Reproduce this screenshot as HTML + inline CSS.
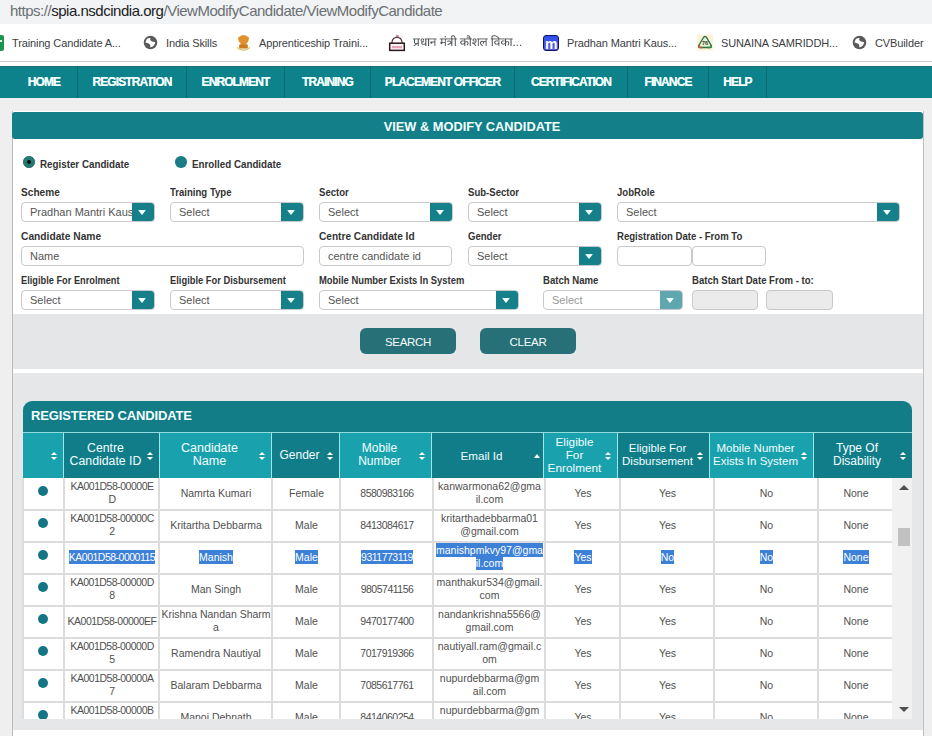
<!DOCTYPE html>
<html><head><meta charset="utf-8">
<style>
*{box-sizing:border-box;margin:0;padding:0}
html,body{width:932px;height:736px;overflow:hidden;background:#efefef;font-family:"Liberation Sans",sans-serif;position:relative}
.a{position:absolute}
#url{left:0;top:0;width:932px;height:24px;background:#f1f3f4}
#url span{position:absolute;left:10px;top:2px;font-size:15px;letter-spacing:-0.48px;color:#6b6f73;white-space:nowrap;line-height:18px}
#url b{font-weight:normal;color:#202124}
#bm{left:0;top:24px;width:932px;height:37px;background:#fff}
.bt{position:absolute;top:12px;font-size:11px;letter-spacing:-0.12px;color:#3c4043;white-space:nowrap;line-height:14px}
#sep{left:0;top:61px;width:932px;height:1px;background:#c9cacb}
#gap{left:0;top:62px;width:932px;height:4px;background:#fff}
#nav{left:0;top:66px;width:932px;height:32px;background:#0e828a;border-top:1px solid #1b6d73}
.ni{position:absolute;top:-1px;height:32px;border-right:1px solid #0b6a72;color:#f0ffff;font-size:12px;font-weight:bold;letter-spacing:-0.9px;text-shadow:0 0 0.4px #fff;text-align:center;line-height:32px;white-space:nowrap}
#panel{left:12px;top:111px;width:912px;height:640px;background:#fff;border-right:1px solid #c8c8c8;border-left:1px solid #dcdcdc}
#ph{left:0;top:0;width:911px;height:28px;background:#127f89;border-radius:3px 3px 3px 3px;color:#f4ffff;font-size:12.5px;font-weight:bold;text-align:center;line-height:28px}
.lb{position:absolute;font-size:11px;font-weight:bold;color:#333;white-space:nowrap;line-height:12px;transform:scaleX(0.87);transform-origin:0 0}
.sel{position:absolute;height:20px;border:1px solid #c9c9c9;border-radius:4px;background:#fff;overflow:hidden}
.sel span{position:absolute;left:8px;top:3px;font-size:11px;color:#555;white-space:nowrap;line-height:13px}
.sel i{position:absolute;right:-1px;top:-1px;width:23px;height:20px;background:#15808a;border-radius:0 4px 4px 0}
.dis span{color:#9a9a9a}.dis i{background:#5fa7af}
.sel i:after{content:"";position:absolute;left:5.5px;top:8px;border-left:4.8px solid transparent;border-right:4.8px solid transparent;border-top:5px solid #f4ffff;border-radius:1px}
#gray1{left:1px;top:202px;width:910px;height:55px;background:#e5e6e8}
.btn{position:absolute;top:217px;width:96px;height:26px;background:#287078;border-radius:6px;color:#f4fbfc;font-size:11.5px;letter-spacing:-0.3px;text-align:center;line-height:28px}
#gray2{left:1px;top:262px;width:910px;height:357px;background:#e6e7e9}
#tp{left:23px;top:401px;width:889px;height:32px;background:#127a84;border-radius:9px 9px 0 0;color:#f6ffff;font-size:13px;font-weight:bold;line-height:30px;padding-left:8px;letter-spacing:0}
.th{position:absolute;z-index:2;top:432px;height:46px;color:#f2fdff;font-size:12px;text-align:center;line-height:13px;border-left:1.5px solid #9de8ed;border-top:1px solid #8fdbe0}
.th span{position:absolute;left:0;right:12px;top:50%;transform:translateY(-50%);margin-top:-1px}
.th.l{background:#19a2ae}.th.d{background:#107d89}
.th u{position:absolute;right:9px;top:19px;width:0;height:0}
.th u:before{content:"";position:absolute;left:-3px;top:0;border-left:3px solid transparent;border-right:3px solid transparent;border-bottom:3.5px solid #fff}
.th u:after{content:"";position:absolute;left:-3px;top:4.5px;border-left:3px solid transparent;border-right:3px solid transparent;border-top:3.5px solid #fff}
.th u.up{top:21px;right:6px}
.th u.up:before{left:-3px;border-left-width:3px;border-right-width:3px;border-bottom-width:4.5px}
.th u.up:after{display:none}
.td{position:absolute;height:32px;display:flex;align-items:center;justify-content:center;text-align:center;font-size:10.5px;color:#505050;line-height:13px}
.td.s i{font-style:normal;background:#3d80d8;color:#fff;padding:1px 0}
.dot{position:absolute;left:15px;width:10px;height:10px;border-radius:50%;background:#157585}
</style></head><body>
<div id="url" class="a"><span>https://<b>spia.nsdcindia.org</b>/ViewModifyCandidate/ViewModifyCandidate</span></div>
<div id="bm" class="a">
  <div class="a" style="left:0;top:11px;width:4px;height:16px;background:#1b9550;border-radius:0 2px 2px 0"></div><div class="a" style="left:0;top:16px;width:2px;height:2px;background:#dff3e6"></div>
  <div class="bt" style="left:12px">Training Candidate A...</div>
  <svg class="a" style="left:143px;top:11px" width="15" height="15" viewBox="0 0 15 15"><circle cx="7.5" cy="7.5" r="6.8" fill="#5a5a5a"/><path d="M3.2 5.2 C4.2 3.2 6.2 2.6 7.6 3.2 C6.8 4.4 7.2 5.4 8.6 6.2 C9.8 7.0 11.4 6.6 12.2 7.6 C11.8 10.2 9.8 12.4 7.2 12.2 C7.6 10.8 7.2 9.4 5.8 8.6 C4.8 8.0 3.4 8.2 2.6 7.8 C2.6 6.8 2.8 6.0 3.2 5.2Z" fill="#fff"/></svg>
  <div class="bt" style="left:166px">India Skills</div>
  <svg class="a" style="left:235px;top:10px" width="17" height="19" viewBox="0 0 17 19"><path d="M3 4.5 Q3 2.5 5 2.5 Q6 1 8.5 1.2 Q11 1 12 2.5 Q14 2.5 14 4.5 L13 8 L11.5 9 L11.5 11 L5.5 11 L5.5 9 L4 8 Z" fill="#e0902c"/><rect x="4.2" y="10.5" width="8.6" height="4" rx="0.8" fill="#cc7a1c"/><path d="M2 13.5 Q8.5 19 15 13.5" stroke="#d8c878" stroke-width="1.4" fill="none"/></svg>
  <div class="bt" style="left:259px">Apprenticeship Traini...</div>
  <svg class="a" style="left:388px;top:10px" width="18" height="18" viewBox="0 0 18 18"><rect x="7.8" y="1" width="3" height="2.2" fill="#e48aa6"/><path d="M8.5 3 L10 4" stroke="#e48aa6" stroke-width="1"/><path d="M3.8 9 Q4.5 3.2 9 3.4 Q13.5 3.2 14.2 9" stroke="#5a3a3e" stroke-width="1.3" fill="none"/><rect x="1.7" y="9.2" width="14.6" height="7.2" fill="#fbf0f3" stroke="#2e1a1c" stroke-width="1.5"/><rect x="4" y="12" width="10" height="2.2" fill="#eaa2b8"/></svg>
  <svg class="a" style="left:413px;top:11px" width="109" height="12" viewBox="0 0 436 48"><path fill="#505357" d="M157 1h6v1h-6zM217 1h6v1h-6zM320 1h8v1h-8zM155 2h10v1h-10zM216 2h9v1h-9zM318 2h14v1h-14zM154 3h12v1h-12zM217 3h9v1h-9zM316 3h18v1h-18zM128 4h2v1h-2zM153 4h14v1h-14zM217 4h2v1h-2zM222 4h5v1h-5zM315 4h10v1h-10zM326 4h10v1h-10zM127 5h4v1h-4zM153 5h4v1h-4zM163 5h5v1h-5zM224 5h3v1h-3zM315 5h5v1h-5zM331 5h7v1h-7zM126 6h5v1h-5zM153 6h4v1h-4zM164 6h4v1h-4zM225 6h3v1h-3zM314 6h5v1h-5zM333 6h6v1h-6zM126 7h5v1h-5zM153 7h3v1h-3zM165 7h4v1h-4zM216 7h7v1h-7zM225 7h3v1h-3zM314 7h4v1h-4zM335 7h5v1h-5zM127 8h4v1h-4zM153 8h3v1h-3zM165 8h4v1h-4zM215 8h9v1h-9zM226 8h3v1h-3zM314 8h4v1h-4zM336 8h5v1h-5zM128 9h2v1h-2zM153 9h3v1h-3zM166 9h4v1h-4zM216 9h13v1h-13zM314 9h3v1h-3zM337 9h5v1h-5zM153 10h4v1h-4zM166 10h4v1h-4zM216 10h2v1h-2zM223 10h7v1h-7zM314 10h4v1h-4zM338 10h5v1h-5zM153 11h4v1h-4zM167 11h3v1h-3zM224 11h6v1h-6zM314 11h4v1h-4zM339 11h5v1h-5zM153 12h4v1h-4zM167 12h3v1h-3zM226 12h4v1h-4zM314 12h4v1h-4zM340 12h4v1h-4zM154 13h4v1h-4zM167 13h4v1h-4zM226 13h5v1h-5zM315 13h4v1h-4zM341 13h4v1h-4zM0 14h28v1h-28zM34 14h7v1h-7zM47 14h47v1h-47zM107 14h55v1h-55zM163 14h13v1h-13zM187 14h49v1h-49zM242 14h7v1h-7zM256 14h43v1h-43zM311 14h88v1h-88zM0 15h28v1h-28zM33 15h10v1h-10zM47 15h47v1h-47zM107 15h55v1h-55zM163 15h13v1h-13zM187 15h49v1h-49zM240 15h11v1h-11zM255 15h44v1h-44zM311 15h88v1h-88zM0 16h28v1h-28zM32 16h11v1h-11zM47 16h47v1h-47zM107 16h55v1h-55zM163 16h13v1h-13zM187 16h49v1h-49zM239 16h13v1h-13zM255 16h44v1h-44zM311 16h88v1h-88zM3 17h5v1h-5zM19 17h5v1h-5zM31 17h4v1h-4zM40 17h4v1h-4zM49 17h5v1h-5zM56 17h3v1h-3zM60 17h5v1h-5zM67 17h3v1h-3zM85 17h5v1h-5zM112 17h6v1h-6zM127 17h5v1h-5zM135 17h2v1h-2zM153 17h5v1h-5zM167 17h5v1h-5zM205 17h5v1h-5zM223 17h2v1h-2zM227 17h5v1h-5zM239 17h4v1h-4zM248 17h5v1h-5zM259 17h5v1h-5zM266 17h3v1h-3zM290 17h5v1h-5zM315 17h5v1h-5zM323 17h2v1h-2zM341 17h5v1h-5zM368 17h5v1h-5zM386 17h2v1h-2zM390 17h5v1h-5zM4 18h4v1h-4zM19 18h4v1h-4zM31 18h4v1h-4zM40 18h4v1h-4zM49 18h4v1h-4zM60 18h4v1h-4zM86 18h3v1h-3zM113 18h4v1h-4zM128 18h3v1h-3zM153 18h4v1h-4zM167 18h4v1h-4zM205 18h4v1h-4zM227 18h4v1h-4zM239 18h4v1h-4zM249 18h4v1h-4zM260 18h3v1h-3zM291 18h3v1h-3zM315 18h4v1h-4zM342 18h3v1h-3zM368 18h4v1h-4zM390 18h4v1h-4zM4 19h4v1h-4zM19 19h4v1h-4zM31 19h3v1h-3zM40 19h4v1h-4zM49 19h4v1h-4zM60 19h4v1h-4zM86 19h3v1h-3zM113 19h4v1h-4zM128 19h3v1h-3zM153 19h4v1h-4zM167 19h4v1h-4zM205 19h4v1h-4zM227 19h4v1h-4zM239 19h3v1h-3zM250 19h4v1h-4zM260 19h3v1h-3zM291 19h3v1h-3zM315 19h4v1h-4zM342 19h3v1h-3zM368 19h4v1h-4zM390 19h4v1h-4zM4 20h4v1h-4zM19 20h4v1h-4zM31 20h3v1h-3zM40 20h4v1h-4zM49 20h4v1h-4zM60 20h4v1h-4zM86 20h3v1h-3zM113 20h4v1h-4zM128 20h3v1h-3zM153 20h4v1h-4zM167 20h4v1h-4zM205 20h4v1h-4zM227 20h4v1h-4zM239 20h3v1h-3zM250 20h4v1h-4zM260 20h3v1h-3zM291 20h3v1h-3zM315 20h4v1h-4zM342 20h3v1h-3zM368 20h4v1h-4zM390 20h4v1h-4zM4 21h4v1h-4zM19 21h4v1h-4zM31 21h3v1h-3zM39 21h4v1h-4zM49 21h4v1h-4zM60 21h4v1h-4zM86 21h3v1h-3zM113 21h4v1h-4zM128 21h3v1h-3zM153 21h4v1h-4zM167 21h4v1h-4zM205 21h4v1h-4zM227 21h4v1h-4zM239 21h4v1h-4zM250 21h4v1h-4zM260 21h3v1h-3zM291 21h3v1h-3zM315 21h4v1h-4zM342 21h3v1h-3zM368 21h4v1h-4zM390 21h4v1h-4zM4 22h4v1h-4zM19 22h4v1h-4zM31 22h4v1h-4zM40 22h2v1h-2zM49 22h4v1h-4zM60 22h4v1h-4zM86 22h3v1h-3zM113 22h4v1h-4zM128 22h3v1h-3zM141 22h5v1h-5zM153 22h4v1h-4zM167 22h4v1h-4zM195 22h8v1h-8zM205 22h4v1h-4zM227 22h4v1h-4zM239 22h5v1h-5zM250 22h4v1h-4zM260 22h3v1h-3zM291 22h3v1h-3zM315 22h4v1h-4zM331 22h9v1h-9zM342 22h3v1h-3zM358 22h8v1h-8zM368 22h4v1h-4zM390 22h4v1h-4zM4 23h4v1h-4zM19 23h4v1h-4zM31 23h4v1h-4zM49 23h4v1h-4zM60 23h4v1h-4zM86 23h3v1h-3zM113 23h4v1h-4zM128 23h3v1h-3zM138 23h11v1h-11zM153 23h4v1h-4zM167 23h4v1h-4zM193 23h10v1h-10zM205 23h4v1h-4zM227 23h4v1h-4zM240 23h7v1h-7zM250 23h4v1h-4zM260 23h3v1h-3zM275 23h3v1h-3zM290 23h4v1h-4zM315 23h4v1h-4zM329 23h11v1h-11zM342 23h3v1h-3zM356 23h10v1h-10zM368 23h4v1h-4zM390 23h4v1h-4zM4 24h4v1h-4zM19 24h4v1h-4zM32 24h4v1h-4zM49 24h4v1h-4zM60 24h4v1h-4zM86 24h3v1h-3zM113 24h4v1h-4zM128 24h3v1h-3zM137 24h13v1h-13zM153 24h4v1h-4zM167 24h4v1h-4zM191 24h12v1h-12zM205 24h4v1h-4zM227 24h4v1h-4zM241 24h6v1h-6zM250 24h4v1h-4zM260 24h3v1h-3zM272 24h9v1h-9zM285 24h9v1h-9zM315 24h4v1h-4zM327 24h13v1h-13zM342 24h3v1h-3zM354 24h12v1h-12zM368 24h4v1h-4zM390 24h4v1h-4zM4 25h4v1h-4zM19 25h4v1h-4zM33 25h11v1h-11zM49 25h4v1h-4zM60 25h4v1h-4zM86 25h3v1h-3zM113 25h4v1h-4zM128 25h3v1h-3zM137 25h14v1h-14zM153 25h4v1h-4zM167 25h4v1h-4zM191 25h6v1h-6zM205 25h4v1h-4zM211 25h7v1h-7zM227 25h4v1h-4zM243 25h4v1h-4zM250 25h4v1h-4zM260 25h3v1h-3zM271 25h23v1h-23zM315 25h4v1h-4zM327 25h6v1h-6zM342 25h3v1h-3zM354 25h6v1h-6zM368 25h4v1h-4zM374 25h7v1h-7zM390 25h4v1h-4zM4 26h4v1h-4zM19 26h4v1h-4zM34 26h10v1h-10zM49 26h4v1h-4zM60 26h4v1h-4zM71 26h18v1h-18zM113 26h4v1h-4zM128 26h3v1h-3zM137 26h3v1h-3zM147 26h5v1h-5zM153 26h4v1h-4zM167 26h4v1h-4zM190 26h5v1h-5zM205 26h15v1h-15zM227 26h4v1h-4zM249 26h4v1h-4zM260 26h3v1h-3zM270 26h24v1h-24zM315 26h4v1h-4zM326 26h5v1h-5zM342 26h3v1h-3zM353 26h5v1h-5zM368 26h15v1h-15zM390 26h4v1h-4zM4 27h4v1h-4zM19 27h4v1h-4zM35 27h9v1h-9zM49 27h4v1h-4zM60 27h4v1h-4zM69 27h20v1h-20zM113 27h4v1h-4zM128 27h3v1h-3zM148 27h4v1h-4zM153 27h4v1h-4zM167 27h4v1h-4zM190 27h4v1h-4zM205 27h15v1h-15zM227 27h4v1h-4zM249 27h4v1h-4zM260 27h3v1h-3zM269 27h5v1h-5zM280 27h7v1h-7zM291 27h3v1h-3zM315 27h4v1h-4zM326 27h4v1h-4zM342 27h3v1h-3zM353 27h4v1h-4zM368 27h15v1h-15zM390 27h4v1h-4zM4 28h4v1h-4zM19 28h4v1h-4zM34 28h10v1h-10zM49 28h4v1h-4zM60 28h4v1h-4zM69 28h20v1h-20zM112 28h6v1h-6zM127 28h4v1h-4zM149 28h8v1h-8zM167 28h4v1h-4zM189 28h4v1h-4zM205 28h8v1h-8zM216 28h5v1h-5zM227 28h4v1h-4zM248 28h5v1h-5zM260 28h3v1h-3zM269 28h4v1h-4zM281 28h5v1h-5zM291 28h3v1h-3zM315 28h4v1h-4zM325 28h4v1h-4zM342 28h3v1h-3zM352 28h4v1h-4zM368 28h8v1h-8zM379 28h5v1h-5zM390 28h4v1h-4zM4 29h4v1h-4zM19 29h4v1h-4zM33 29h5v1h-5zM49 29h4v1h-4zM60 29h4v1h-4zM69 29h20v1h-20zM110 29h21v1h-21zM150 29h7v1h-7zM167 29h4v1h-4zM189 29h4v1h-4zM205 29h6v1h-6zM217 29h4v1h-4zM227 29h4v1h-4zM239 29h2v1h-2zM247 29h5v1h-5zM260 29h3v1h-3zM268 29h5v1h-5zM281 29h4v1h-4zM291 29h3v1h-3zM315 29h4v1h-4zM325 29h4v1h-4zM342 29h3v1h-3zM352 29h4v1h-4zM368 29h6v1h-6zM380 29h4v1h-4zM390 29h4v1h-4zM4 30h4v1h-4zM19 30h4v1h-4zM33 30h4v1h-4zM49 30h4v1h-4zM60 30h4v1h-4zM69 30h8v1h-8zM86 30h3v1h-3zM109 30h22v1h-22zM150 30h7v1h-7zM167 30h4v1h-4zM189 30h4v1h-4zM205 30h5v1h-5zM218 30h4v1h-4zM227 30h4v1h-4zM237 30h6v1h-6zM246 30h5v1h-5zM260 30h3v1h-3zM268 30h4v1h-4zM280 30h5v1h-5zM291 30h3v1h-3zM315 30h4v1h-4zM325 30h4v1h-4zM342 30h3v1h-3zM352 30h4v1h-4zM368 30h5v1h-5zM381 30h4v1h-4zM390 30h4v1h-4zM5 31h4v1h-4zM17 31h6v1h-6zM33 31h4v1h-4zM49 31h4v1h-4zM60 31h4v1h-4zM70 31h7v1h-7zM86 31h3v1h-3zM109 31h22v1h-22zM149 31h8v1h-8zM167 31h4v1h-4zM189 31h4v1h-4zM205 31h4v1h-4zM218 31h4v1h-4zM227 31h4v1h-4zM237 31h13v1h-13zM260 31h3v1h-3zM268 31h4v1h-4zM280 31h4v1h-4zM291 31h3v1h-3zM315 31h4v1h-4zM325 31h4v1h-4zM342 31h3v1h-3zM352 31h4v1h-4zM368 31h4v1h-4zM381 31h4v1h-4zM390 31h4v1h-4zM5 32h6v1h-6zM15 32h8v1h-8zM33 32h4v1h-4zM49 32h4v1h-4zM60 32h4v1h-4zM70 32h7v1h-7zM86 32h3v1h-3zM109 32h8v1h-8zM128 32h3v1h-3zM147 32h10v1h-10zM167 32h4v1h-4zM190 32h4v1h-4zM204 32h5v1h-5zM218 32h4v1h-4zM227 32h4v1h-4zM237 32h12v1h-12zM260 32h3v1h-3zM268 32h4v1h-4zM280 32h4v1h-4zM291 32h3v1h-3zM315 32h4v1h-4zM326 32h4v1h-4zM341 32h4v1h-4zM353 32h4v1h-4zM367 32h5v1h-5zM381 32h4v1h-4zM390 32h4v1h-4zM6 33h17v1h-17zM33 33h4v1h-4zM48 33h5v1h-5zM60 33h4v1h-4zM71 33h6v1h-6zM86 33h3v1h-3zM110 33h7v1h-7zM128 33h3v1h-3zM145 33h12v1h-12zM167 33h4v1h-4zM190 33h4v1h-4zM203 33h6v1h-6zM218 33h4v1h-4zM227 33h4v1h-4zM237 33h11v1h-11zM260 33h3v1h-3zM268 33h4v1h-4zM280 33h4v1h-4zM291 33h3v1h-3zM315 33h4v1h-4zM326 33h4v1h-4zM340 33h5v1h-5zM353 33h4v1h-4zM366 33h6v1h-6zM381 33h4v1h-4zM390 33h4v1h-4zM7 34h16v1h-16zM33 34h5v1h-5zM47 34h6v1h-6zM60 34h4v1h-4zM73 34h3v1h-3zM86 34h3v1h-3zM111 34h6v1h-6zM128 34h3v1h-3zM143 34h8v1h-8zM153 34h4v1h-4zM167 34h4v1h-4zM190 34h6v1h-6zM201 34h8v1h-8zM218 34h4v1h-4zM227 34h4v1h-4zM238 34h8v1h-8zM260 34h3v1h-3zM269 34h4v1h-4zM291 34h3v1h-3zM315 34h4v1h-4zM326 34h6v1h-6zM338 34h7v1h-7zM353 34h6v1h-6zM364 34h8v1h-8zM381 34h4v1h-4zM390 34h4v1h-4zM9 35h9v1h-9zM19 35h4v1h-4zM34 35h6v1h-6zM45 35h8v1h-8zM60 35h4v1h-4zM86 35h3v1h-3zM112 35h5v1h-5zM128 35h3v1h-3zM141 35h8v1h-8zM153 35h4v1h-4zM167 35h4v1h-4zM191 35h18v1h-18zM218 35h3v1h-3zM227 35h4v1h-4zM240 35h7v1h-7zM260 35h3v1h-3zM269 35h4v1h-4zM291 35h3v1h-3zM315 35h4v1h-4zM327 35h18v1h-18zM354 35h18v1h-18zM381 35h3v1h-3zM390 35h4v1h-4zM11 36h5v1h-5zM19 36h4v1h-4zM35 36h18v1h-18zM60 36h4v1h-4zM86 36h3v1h-3zM113 36h2v1h-2zM128 36h3v1h-3zM139 36h9v1h-9zM153 36h4v1h-4zM167 36h4v1h-4zM192 36h12v1h-12zM205 36h4v1h-4zM217 36h4v1h-4zM227 36h4v1h-4zM244 36h4v1h-4zM260 36h3v1h-3zM269 36h5v1h-5zM291 36h3v1h-3zM315 36h4v1h-4zM328 36h17v1h-17zM355 36h12v1h-12zM368 36h4v1h-4zM380 36h4v1h-4zM390 36h4v1h-4zM9 37h6v1h-6zM19 37h4v1h-4zM36 37h12v1h-12zM49 37h4v1h-4zM60 37h4v1h-4zM86 37h3v1h-3zM128 37h3v1h-3zM138 37h8v1h-8zM153 37h4v1h-4zM167 37h4v1h-4zM194 37h8v1h-8zM205 37h4v1h-4zM217 37h4v1h-4zM227 37h4v1h-4zM244 37h5v1h-5zM260 37h3v1h-3zM270 37h5v1h-5zM291 37h3v1h-3zM315 37h4v1h-4zM330 37h10v1h-10zM342 37h3v1h-3zM357 37h8v1h-8zM368 37h4v1h-4zM380 37h4v1h-4zM390 37h4v1h-4zM7 38h6v1h-6zM19 38h4v1h-4zM38 38h8v1h-8zM49 38h4v1h-4zM60 38h4v1h-4zM86 38h3v1h-3zM128 38h3v1h-3zM139 38h5v1h-5zM153 38h4v1h-4zM167 38h4v1h-4zM205 38h4v1h-4zM216 38h4v1h-4zM227 38h4v1h-4zM245 38h5v1h-5zM260 38h3v1h-3zM271 38h5v1h-5zM291 38h3v1h-3zM315 38h4v1h-4zM342 38h3v1h-3zM368 38h4v1h-4zM379 38h4v1h-4zM390 38h4v1h-4zM6 39h6v1h-6zM19 39h4v1h-4zM49 39h4v1h-4zM60 39h4v1h-4zM86 39h3v1h-3zM128 39h3v1h-3zM139 39h3v1h-3zM153 39h4v1h-4zM167 39h4v1h-4zM205 39h4v1h-4zM215 39h5v1h-5zM227 39h4v1h-4zM246 39h5v1h-5zM260 39h3v1h-3zM272 39h5v1h-5zM291 39h3v1h-3zM315 39h4v1h-4zM342 39h3v1h-3zM368 39h4v1h-4zM378 39h5v1h-5zM390 39h4v1h-4zM402 39h5v1h-5zM415 39h4v1h-4zM428 39h4v1h-4zM4 40h6v1h-6zM19 40h4v1h-4zM49 40h4v1h-4zM60 40h4v1h-4zM86 40h3v1h-3zM128 40h3v1h-3zM153 40h4v1h-4zM167 40h4v1h-4zM205 40h4v1h-4zM215 40h4v1h-4zM227 40h4v1h-4zM247 40h5v1h-5zM260 40h3v1h-3zM273 40h6v1h-6zM291 40h3v1h-3zM315 40h4v1h-4zM342 40h3v1h-3zM368 40h4v1h-4zM378 40h4v1h-4zM390 40h4v1h-4zM402 40h5v1h-5zM415 40h4v1h-4zM428 40h4v1h-4zM3 41h6v1h-6zM19 41h4v1h-4zM49 41h4v1h-4zM60 41h4v1h-4zM86 41h3v1h-3zM128 41h3v1h-3zM153 41h4v1h-4zM167 41h4v1h-4zM205 41h4v1h-4zM217 41h1v1h-1zM227 41h4v1h-4zM248 41h4v1h-4zM260 41h3v1h-3zM274 41h6v1h-6zM291 41h3v1h-3zM315 41h4v1h-4zM342 41h3v1h-3zM368 41h4v1h-4zM380 41h1v1h-1zM390 41h4v1h-4zM402 41h5v1h-5zM415 41h4v1h-4zM428 41h4v1h-4zM3 42h5v1h-5zM19 42h4v1h-4zM49 42h4v1h-4zM60 42h4v1h-4zM86 42h3v1h-3zM128 42h3v1h-3zM153 42h4v1h-4zM167 42h4v1h-4zM205 42h4v1h-4zM227 42h4v1h-4zM248 42h4v1h-4zM260 42h3v1h-3zM275 42h5v1h-5zM291 42h3v1h-3zM315 42h4v1h-4zM342 42h3v1h-3zM368 42h4v1h-4zM390 42h4v1h-4zM402 42h5v1h-5zM415 42h4v1h-4zM428 42h4v1h-4zM4 43h2v1h-2zM19 43h4v1h-4zM49 43h4v1h-4zM60 43h4v1h-4zM86 43h3v1h-3zM128 43h3v1h-3zM153 43h4v1h-4zM167 43h4v1h-4zM205 43h4v1h-4zM227 43h4v1h-4zM249 43h2v1h-2zM260 43h3v1h-3zM277 43h2v1h-2zM291 43h3v1h-3zM315 43h4v1h-4zM342 43h3v1h-3zM368 43h4v1h-4zM390 43h4v1h-4zM402 43h5v1h-5zM415 43h4v1h-4zM428 43h4v1h-4z"/><path fill="#505357" fill-opacity="0.5" d="M156 1h1v1h-1zM163 1h1v1h-1zM216 1h1v1h-1zM223 1h1v1h-1zM319 1h1v1h-1zM328 1h2v1h-2zM165 2h1v1h-1zM225 2h1v1h-1zM317 2h1v1h-1zM332 2h1v1h-1zM166 3h1v1h-1zM216 3h1v1h-1zM334 3h1v1h-1zM127 4h1v1h-1zM216 4h1v1h-1zM219 4h3v1h-3zM325 4h1v1h-1zM336 4h1v1h-1zM126 5h1v1h-1zM157 5h1v1h-1zM223 5h1v1h-1zM227 5h1v1h-1zM314 5h1v1h-1zM320 5h1v1h-1zM330 5h1v1h-1zM131 6h1v1h-1zM152 6h1v1h-1zM168 6h1v1h-1zM224 6h1v1h-1zM339 6h1v1h-1zM131 7h1v1h-1zM152 7h1v1h-1zM156 7h1v1h-1zM164 7h1v1h-1zM228 7h1v1h-1zM334 7h1v1h-1zM340 7h1v1h-1zM126 8h1v1h-1zM152 8h1v1h-1zM156 8h1v1h-1zM224 8h2v1h-2zM313 8h1v1h-1zM341 8h1v1h-1zM127 9h1v1h-1zM152 9h1v1h-1zM156 9h1v1h-1zM165 9h1v1h-1zM215 9h1v1h-1zM313 9h1v1h-1zM317 9h1v1h-1zM342 9h1v1h-1zM152 10h1v1h-1zM218 10h5v1h-5zM313 10h1v1h-1zM166 11h1v1h-1zM170 12h1v1h-1zM225 12h1v1h-1zM230 12h1v1h-1zM344 12h1v1h-1zM153 13h1v1h-1zM314 13h1v1h-1zM33 14h1v1h-1zM41 14h1v1h-1zM46 14h1v1h-1zM94 14h1v1h-1zM162 14h1v1h-1zM241 14h1v1h-1zM249 14h1v1h-1zM255 14h1v1h-1zM32 15h1v1h-1zM46 15h1v1h-1zM94 15h1v1h-1zM162 15h1v1h-1zM251 15h1v1h-1zM299 15h1v1h-1zM31 16h1v1h-1zM43 16h1v1h-1zM46 16h1v1h-1zM94 16h1v1h-1zM162 16h1v1h-1zM299 16h1v1h-1zM0 17h3v1h-3zM8 17h11v1h-11zM24 17h4v1h-4zM35 17h1v1h-1zM39 17h1v1h-1zM46 17h3v1h-3zM54 17h2v1h-2zM59 17h1v1h-1zM65 17h2v1h-2zM70 17h15v1h-15zM90 17h4v1h-4zM107 17h5v1h-5zM118 17h9v1h-9zM132 17h3v1h-3zM137 17h16v1h-16zM158 17h4v1h-4zM163 17h4v1h-4zM172 17h4v1h-4zM187 17h18v1h-18zM210 17h13v1h-13zM225 17h2v1h-2zM232 17h4v1h-4zM243 17h1v1h-1zM255 17h4v1h-4zM264 17h2v1h-2zM269 17h21v1h-21zM295 17h4v1h-4zM311 17h4v1h-4zM320 17h3v1h-3zM325 17h16v1h-16zM346 17h22v1h-22zM373 17h13v1h-13zM388 17h2v1h-2zM395 17h4v1h-4zM30 18h1v1h-1zM53 18h1v1h-1zM64 18h1v1h-1zM85 18h1v1h-1zM89 18h1v1h-1zM127 18h1v1h-1zM131 18h1v1h-1zM157 18h1v1h-1zM171 18h1v1h-1zM231 18h1v1h-1zM238 18h1v1h-1zM253 18h1v1h-1zM259 18h1v1h-1zM263 18h1v1h-1zM290 18h1v1h-1zM294 18h1v1h-1zM319 18h1v1h-1zM341 18h1v1h-1zM345 18h1v1h-1zM394 18h1v1h-1zM30 19h1v1h-1zM34 19h1v1h-1zM53 19h1v1h-1zM64 19h1v1h-1zM85 19h1v1h-1zM89 19h1v1h-1zM127 19h1v1h-1zM131 19h1v1h-1zM157 19h1v1h-1zM171 19h1v1h-1zM231 19h1v1h-1zM238 19h1v1h-1zM242 19h1v1h-1zM249 19h1v1h-1zM259 19h1v1h-1zM263 19h1v1h-1zM290 19h1v1h-1zM294 19h1v1h-1zM319 19h1v1h-1zM341 19h1v1h-1zM345 19h1v1h-1zM394 19h1v1h-1zM30 20h1v1h-1zM34 20h1v1h-1zM39 20h1v1h-1zM53 20h1v1h-1zM64 20h1v1h-1zM85 20h1v1h-1zM89 20h1v1h-1zM127 20h1v1h-1zM131 20h1v1h-1zM157 20h1v1h-1zM171 20h1v1h-1zM231 20h1v1h-1zM238 20h1v1h-1zM242 20h1v1h-1zM259 20h1v1h-1zM263 20h1v1h-1zM290 20h1v1h-1zM294 20h1v1h-1zM319 20h1v1h-1zM341 20h1v1h-1zM345 20h1v1h-1zM394 20h1v1h-1zM30 21h1v1h-1zM34 21h1v1h-1zM43 21h1v1h-1zM53 21h1v1h-1zM64 21h1v1h-1zM85 21h1v1h-1zM89 21h1v1h-1zM127 21h1v1h-1zM131 21h1v1h-1zM157 21h1v1h-1zM171 21h1v1h-1zM231 21h1v1h-1zM259 21h1v1h-1zM263 21h1v1h-1zM290 21h1v1h-1zM294 21h1v1h-1zM319 21h1v1h-1zM341 21h1v1h-1zM345 21h1v1h-1zM394 21h1v1h-1zM42 22h1v1h-1zM53 22h1v1h-1zM64 22h1v1h-1zM85 22h1v1h-1zM89 22h1v1h-1zM127 22h1v1h-1zM131 22h1v1h-1zM140 22h1v1h-1zM146 22h1v1h-1zM157 22h1v1h-1zM171 22h1v1h-1zM194 22h1v1h-1zM203 22h1v1h-1zM231 22h1v1h-1zM244 22h1v1h-1zM259 22h1v1h-1zM263 22h1v1h-1zM290 22h1v1h-1zM294 22h1v1h-1zM319 22h1v1h-1zM330 22h1v1h-1zM341 22h1v1h-1zM345 22h1v1h-1zM357 22h1v1h-1zM366 22h1v1h-1zM394 22h1v1h-1zM35 23h1v1h-1zM53 23h1v1h-1zM64 23h1v1h-1zM85 23h1v1h-1zM89 23h1v1h-1zM127 23h1v1h-1zM131 23h1v1h-1zM137 23h1v1h-1zM157 23h1v1h-1zM171 23h1v1h-1zM192 23h1v1h-1zM203 23h1v1h-1zM231 23h1v1h-1zM247 23h1v1h-1zM259 23h1v1h-1zM263 23h1v1h-1zM273 23h2v1h-2zM278 23h1v1h-1zM288 23h2v1h-2zM294 23h1v1h-1zM319 23h1v1h-1zM328 23h1v1h-1zM341 23h1v1h-1zM345 23h1v1h-1zM355 23h1v1h-1zM366 23h1v1h-1zM394 23h1v1h-1zM31 24h1v1h-1zM36 24h1v1h-1zM53 24h1v1h-1zM64 24h1v1h-1zM85 24h1v1h-1zM89 24h1v1h-1zM127 24h1v1h-1zM131 24h1v1h-1zM136 24h1v1h-1zM157 24h1v1h-1zM171 24h1v1h-1zM203 24h1v1h-1zM231 24h1v1h-1zM247 24h1v1h-1zM259 24h1v1h-1zM263 24h1v1h-1zM271 24h1v1h-1zM281 24h1v1h-1zM294 24h1v1h-1zM319 24h1v1h-1zM341 24h1v1h-1zM345 24h1v1h-1zM366 24h1v1h-1zM394 24h1v1h-1zM32 25h1v1h-1zM53 25h1v1h-1zM64 25h1v1h-1zM85 25h1v1h-1zM89 25h1v1h-1zM127 25h1v1h-1zM131 25h1v1h-1zM157 25h1v1h-1zM171 25h1v1h-1zM190 25h1v1h-1zM197 25h2v1h-2zM201 25h2v1h-2zM210 25h1v1h-1zM218 25h1v1h-1zM231 25h1v1h-1zM242 25h1v1h-1zM249 25h1v1h-1zM259 25h1v1h-1zM263 25h1v1h-1zM270 25h1v1h-1zM294 25h1v1h-1zM319 25h1v1h-1zM326 25h1v1h-1zM333 25h3v1h-3zM337 25h3v1h-3zM341 25h1v1h-1zM345 25h1v1h-1zM353 25h1v1h-1zM360 25h2v1h-2zM364 25h2v1h-2zM373 25h1v1h-1zM381 25h1v1h-1zM394 25h1v1h-1zM33 26h1v1h-1zM53 26h1v1h-1zM64 26h1v1h-1zM70 26h1v1h-1zM89 26h1v1h-1zM127 26h1v1h-1zM131 26h1v1h-1zM140 26h1v1h-1zM146 26h1v1h-1zM157 26h1v1h-1zM171 26h1v1h-1zM231 26h1v1h-1zM253 26h1v1h-1zM259 26h1v1h-1zM263 26h1v1h-1zM269 26h1v1h-1zM294 26h1v1h-1zM319 26h1v1h-1zM341 26h1v1h-1zM345 26h1v1h-1zM394 26h1v1h-1zM34 27h1v1h-1zM53 27h1v1h-1zM64 27h1v1h-1zM89 27h1v1h-1zM127 27h1v1h-1zM131 27h1v1h-1zM147 27h1v1h-1zM152 27h1v1h-1zM157 27h1v1h-1zM171 27h1v1h-1zM189 27h1v1h-1zM220 27h1v1h-1zM231 27h1v1h-1zM248 27h1v1h-1zM259 27h1v1h-1zM263 27h1v1h-1zM274 27h1v1h-1zM279 27h1v1h-1zM287 27h1v1h-1zM290 27h1v1h-1zM294 27h1v1h-1zM319 27h1v1h-1zM325 27h1v1h-1zM341 27h1v1h-1zM345 27h1v1h-1zM352 27h1v1h-1zM383 27h1v1h-1zM394 27h1v1h-1zM33 28h1v1h-1zM53 28h1v1h-1zM64 28h1v1h-1zM89 28h1v1h-1zM111 28h1v1h-1zM118 28h9v1h-9zM131 28h1v1h-1zM148 28h1v1h-1zM157 28h1v1h-1zM171 28h1v1h-1zM193 28h1v1h-1zM213 28h3v1h-3zM231 28h1v1h-1zM259 28h1v1h-1zM263 28h1v1h-1zM268 28h1v1h-1zM273 28h1v1h-1zM290 28h1v1h-1zM294 28h1v1h-1zM319 28h1v1h-1zM329 28h1v1h-1zM341 28h1v1h-1zM345 28h1v1h-1zM356 28h1v1h-1zM376 28h3v1h-3zM394 28h1v1h-1zM53 29h1v1h-1zM64 29h1v1h-1zM89 29h1v1h-1zM109 29h1v1h-1zM131 29h1v1h-1zM149 29h1v1h-1zM157 29h1v1h-1zM171 29h1v1h-1zM193 29h1v1h-1zM221 29h1v1h-1zM231 29h1v1h-1zM238 29h1v1h-1zM241 29h1v1h-1zM259 29h1v1h-1zM263 29h1v1h-1zM280 29h1v1h-1zM290 29h1v1h-1zM294 29h1v1h-1zM319 29h1v1h-1zM329 29h1v1h-1zM341 29h1v1h-1zM345 29h1v1h-1zM356 29h1v1h-1zM384 29h1v1h-1zM394 29h1v1h-1zM8 30h1v1h-1zM18 30h1v1h-1zM53 30h1v1h-1zM64 30h1v1h-1zM85 30h1v1h-1zM89 30h1v1h-1zM131 30h1v1h-1zM157 30h1v1h-1zM171 30h1v1h-1zM217 30h1v1h-1zM231 30h1v1h-1zM245 30h1v1h-1zM251 30h1v1h-1zM259 30h1v1h-1zM263 30h1v1h-1zM272 30h1v1h-1zM290 30h1v1h-1zM294 30h1v1h-1zM319 30h1v1h-1zM341 30h1v1h-1zM345 30h1v1h-1zM380 30h1v1h-1zM394 30h1v1h-1zM4 31h1v1h-1zM32 31h1v1h-1zM53 31h1v1h-1zM64 31h1v1h-1zM69 31h1v1h-1zM85 31h1v1h-1zM89 31h1v1h-1zM131 31h1v1h-1zM157 31h1v1h-1zM171 31h1v1h-1zM193 31h1v1h-1zM209 31h1v1h-1zM231 31h1v1h-1zM236 31h1v1h-1zM250 31h1v1h-1zM259 31h1v1h-1zM263 31h1v1h-1zM290 31h1v1h-1zM294 31h1v1h-1zM319 31h1v1h-1zM329 31h1v1h-1zM341 31h1v1h-1zM345 31h1v1h-1zM356 31h1v1h-1zM372 31h1v1h-1zM394 31h1v1h-1zM11 32h1v1h-1zM14 32h1v1h-1zM53 32h1v1h-1zM64 32h1v1h-1zM85 32h1v1h-1zM89 32h1v1h-1zM127 32h1v1h-1zM131 32h1v1h-1zM157 32h1v1h-1zM171 32h1v1h-1zM189 32h1v1h-1zM231 32h1v1h-1zM236 32h1v1h-1zM249 32h1v1h-1zM259 32h1v1h-1zM263 32h1v1h-1zM279 32h1v1h-1zM290 32h1v1h-1zM294 32h1v1h-1zM319 32h1v1h-1zM325 32h1v1h-1zM340 32h1v1h-1zM345 32h1v1h-1zM352 32h1v1h-1zM394 32h1v1h-1zM53 33h1v1h-1zM64 33h1v1h-1zM85 33h1v1h-1zM89 33h1v1h-1zM127 33h1v1h-1zM131 33h1v1h-1zM157 33h1v1h-1zM171 33h1v1h-1zM194 33h1v1h-1zM202 33h1v1h-1zM231 33h1v1h-1zM236 33h1v1h-1zM259 33h1v1h-1zM263 33h1v1h-1zM272 33h1v1h-1zM279 33h1v1h-1zM290 33h1v1h-1zM294 33h1v1h-1zM319 33h1v1h-1zM330 33h1v1h-1zM339 33h1v1h-1zM345 33h1v1h-1zM357 33h1v1h-1zM365 33h1v1h-1zM394 33h1v1h-1zM46 34h1v1h-1zM53 34h1v1h-1zM64 34h1v1h-1zM72 34h1v1h-1zM85 34h1v1h-1zM89 34h1v1h-1zM110 34h1v1h-1zM127 34h1v1h-1zM131 34h1v1h-1zM151 34h1v1h-1zM157 34h1v1h-1zM171 34h1v1h-1zM196 34h1v1h-1zM200 34h1v1h-1zM231 34h1v1h-1zM237 34h1v1h-1zM246 34h1v1h-1zM259 34h1v1h-1zM263 34h1v1h-1zM268 34h1v1h-1zM282 34h2v1h-2zM290 34h1v1h-1zM294 34h1v1h-1zM319 34h1v1h-1zM337 34h1v1h-1zM345 34h1v1h-1zM359 34h1v1h-1zM363 34h1v1h-1zM394 34h1v1h-1zM8 35h1v1h-1zM33 35h1v1h-1zM40 35h5v1h-5zM53 35h1v1h-1zM64 35h1v1h-1zM85 35h1v1h-1zM89 35h1v1h-1zM111 35h1v1h-1zM127 35h1v1h-1zM131 35h1v1h-1zM149 35h1v1h-1zM157 35h1v1h-1zM171 35h1v1h-1zM217 35h1v1h-1zM221 35h1v1h-1zM231 35h1v1h-1zM239 35h1v1h-1zM247 35h1v1h-1zM259 35h1v1h-1zM263 35h1v1h-1zM273 35h1v1h-1zM290 35h1v1h-1zM294 35h1v1h-1zM319 35h1v1h-1zM345 35h1v1h-1zM380 35h1v1h-1zM384 35h1v1h-1zM394 35h1v1h-1zM10 36h1v1h-1zM16 36h1v1h-1zM34 36h1v1h-1zM53 36h1v1h-1zM64 36h1v1h-1zM85 36h1v1h-1zM89 36h1v1h-1zM115 36h1v1h-1zM127 36h1v1h-1zM131 36h1v1h-1zM157 36h1v1h-1zM171 36h1v1h-1zM204 36h1v1h-1zM221 36h1v1h-1zM231 36h1v1h-1zM243 36h1v1h-1zM248 36h1v1h-1zM259 36h1v1h-1zM263 36h1v1h-1zM290 36h1v1h-1zM294 36h1v1h-1zM319 36h1v1h-1zM345 36h1v1h-1zM367 36h1v1h-1zM384 36h1v1h-1zM394 36h1v1h-1zM35 37h1v1h-1zM48 37h1v1h-1zM53 37h1v1h-1zM64 37h1v1h-1zM85 37h1v1h-1zM89 37h1v1h-1zM127 37h1v1h-1zM131 37h1v1h-1zM157 37h1v1h-1zM171 37h1v1h-1zM193 37h1v1h-1zM202 37h1v1h-1zM216 37h1v1h-1zM231 37h1v1h-1zM259 37h1v1h-1zM263 37h1v1h-1zM290 37h1v1h-1zM294 37h1v1h-1zM319 37h1v1h-1zM329 37h1v1h-1zM341 37h1v1h-1zM345 37h1v1h-1zM356 37h1v1h-1zM365 37h1v1h-1zM379 37h1v1h-1zM394 37h1v1h-1zM13 38h1v1h-1zM37 38h1v1h-1zM46 38h1v1h-1zM53 38h1v1h-1zM64 38h1v1h-1zM85 38h1v1h-1zM89 38h1v1h-1zM127 38h1v1h-1zM131 38h1v1h-1zM138 38h1v1h-1zM144 38h1v1h-1zM157 38h1v1h-1zM171 38h1v1h-1zM215 38h1v1h-1zM220 38h1v1h-1zM231 38h1v1h-1zM259 38h1v1h-1zM263 38h1v1h-1zM270 38h1v1h-1zM290 38h1v1h-1zM294 38h1v1h-1zM319 38h1v1h-1zM332 38h5v1h-5zM341 38h1v1h-1zM345 38h1v1h-1zM378 38h1v1h-1zM383 38h1v1h-1zM394 38h1v1h-1zM5 39h1v1h-1zM53 39h1v1h-1zM64 39h1v1h-1zM85 39h1v1h-1zM89 39h1v1h-1zM127 39h1v1h-1zM131 39h1v1h-1zM142 39h1v1h-1zM157 39h1v1h-1zM171 39h1v1h-1zM231 39h1v1h-1zM259 39h1v1h-1zM263 39h1v1h-1zM271 39h1v1h-1zM277 39h1v1h-1zM290 39h1v1h-1zM294 39h1v1h-1zM319 39h1v1h-1zM341 39h1v1h-1zM345 39h1v1h-1zM394 39h1v1h-1zM419 39h1v1h-1zM432 39h1v1h-1zM3 40h1v1h-1zM10 40h1v1h-1zM53 40h1v1h-1zM64 40h1v1h-1zM85 40h1v1h-1zM89 40h1v1h-1zM127 40h1v1h-1zM131 40h1v1h-1zM140 40h1v1h-1zM157 40h1v1h-1zM171 40h1v1h-1zM231 40h1v1h-1zM246 40h1v1h-1zM259 40h1v1h-1zM263 40h1v1h-1zM272 40h1v1h-1zM290 40h1v1h-1zM294 40h1v1h-1zM319 40h1v1h-1zM341 40h1v1h-1zM345 40h1v1h-1zM394 40h1v1h-1zM419 40h1v1h-1zM432 40h1v1h-1zM2 41h1v1h-1zM9 41h1v1h-1zM53 41h1v1h-1zM64 41h1v1h-1zM85 41h1v1h-1zM89 41h1v1h-1zM127 41h1v1h-1zM131 41h1v1h-1zM157 41h1v1h-1zM171 41h1v1h-1zM218 41h1v1h-1zM231 41h1v1h-1zM247 41h1v1h-1zM252 41h1v1h-1zM259 41h1v1h-1zM263 41h1v1h-1zM273 41h1v1h-1zM280 41h1v1h-1zM290 41h1v1h-1zM294 41h1v1h-1zM319 41h1v1h-1zM341 41h1v1h-1zM345 41h1v1h-1zM381 41h1v1h-1zM394 41h1v1h-1zM419 41h1v1h-1zM432 41h1v1h-1zM53 42h1v1h-1zM64 42h1v1h-1zM85 42h1v1h-1zM89 42h1v1h-1zM127 42h1v1h-1zM131 42h1v1h-1zM157 42h1v1h-1zM171 42h1v1h-1zM231 42h1v1h-1zM252 42h1v1h-1zM259 42h1v1h-1zM263 42h1v1h-1zM290 42h1v1h-1zM294 42h1v1h-1zM319 42h1v1h-1zM341 42h1v1h-1zM345 42h1v1h-1zM394 42h1v1h-1zM419 42h1v1h-1zM432 42h1v1h-1zM3 43h1v1h-1zM6 43h1v1h-1zM53 43h1v1h-1zM64 43h1v1h-1zM85 43h1v1h-1zM89 43h1v1h-1zM127 43h1v1h-1zM131 43h1v1h-1zM157 43h1v1h-1zM171 43h1v1h-1zM231 43h1v1h-1zM259 43h1v1h-1zM263 43h1v1h-1zM276 43h1v1h-1zM279 43h1v1h-1zM290 43h1v1h-1zM294 43h1v1h-1zM319 43h1v1h-1zM341 43h1v1h-1zM345 43h1v1h-1zM394 43h1v1h-1zM419 43h1v1h-1zM432 43h1v1h-1zM4 44h1v1h-1zM278 44h1v1h-1z"/><path fill="#505357" fill-opacity="0.2" d="M154 2h1v1h-1zM153 3h1v1h-1zM226 3h1v1h-1zM130 4h1v1h-1zM167 4h1v1h-1zM131 5h1v1h-1zM152 5h1v1h-1zM162 5h1v1h-1zM338 5h1v1h-1zM163 6h1v1h-1zM332 6h1v1h-1zM215 7h1v1h-1zM223 7h1v1h-1zM313 7h1v1h-1zM318 7h1v1h-1zM131 8h1v1h-1zM169 8h1v1h-1zM335 8h1v1h-1zM130 9h1v1h-1zM229 9h1v1h-1zM215 10h1v1h-1zM343 10h1v1h-1zM152 11h1v1h-1zM170 11h1v1h-1zM230 11h1v1h-1zM313 11h1v1h-1zM157 12h1v1h-1zM166 12h1v1h-1zM318 12h1v1h-1zM37 13h2v1h-2zM166 13h1v1h-1zM245 13h2v1h-2zM340 13h1v1h-1zM345 13h1v1h-1zM28 14h1v1h-1zM176 14h1v1h-1zM236 14h1v1h-1zM299 14h1v1h-1zM399 14h1v1h-1zM28 15h1v1h-1zM176 15h1v1h-1zM236 15h1v1h-1zM399 15h1v1h-1zM28 16h1v1h-1zM176 16h1v1h-1zM236 16h1v1h-1zM252 16h1v1h-1zM399 16h1v1h-1zM30 17h1v1h-1zM94 17h1v1h-1zM162 17h1v1h-1zM176 17h1v1h-1zM236 17h1v1h-1zM238 17h1v1h-1zM299 17h1v1h-1zM399 17h1v1h-1zM3 18h1v1h-1zM23 18h1v1h-1zM117 18h1v1h-1zM209 18h1v1h-1zM372 18h1v1h-1zM3 19h1v1h-1zM23 19h1v1h-1zM117 19h1v1h-1zM209 19h1v1h-1zM372 19h1v1h-1zM3 20h1v1h-1zM23 20h1v1h-1zM117 20h1v1h-1zM209 20h1v1h-1zM249 20h1v1h-1zM372 20h1v1h-1zM3 21h1v1h-1zM23 21h1v1h-1zM117 21h1v1h-1zM198 21h4v1h-4zM209 21h1v1h-1zM238 21h1v1h-1zM254 21h1v1h-1zM334 21h3v1h-3zM361 21h4v1h-4zM372 21h1v1h-1zM3 22h1v1h-1zM23 22h1v1h-1zM30 22h1v1h-1zM39 22h1v1h-1zM117 22h1v1h-1zM139 22h1v1h-1zM147 22h1v1h-1zM193 22h1v1h-1zM209 22h1v1h-1zM254 22h1v1h-1zM356 22h1v1h-1zM372 22h1v1h-1zM3 23h1v1h-1zM23 23h1v1h-1zM41 23h1v1h-1zM117 23h1v1h-1zM136 23h1v1h-1zM209 23h1v1h-1zM239 23h1v1h-1zM254 23h1v1h-1zM279 23h1v1h-1zM287 23h1v1h-1zM372 23h1v1h-1zM3 24h1v1h-1zM23 24h1v1h-1zM117 24h1v1h-1zM209 24h1v1h-1zM214 24h2v1h-2zM240 24h1v1h-1zM249 24h1v1h-1zM284 24h1v1h-1zM372 24h1v1h-1zM377 24h2v1h-2zM3 25h1v1h-1zM23 25h1v1h-1zM44 25h1v1h-1zM117 25h1v1h-1zM136 25h1v1h-1zM199 25h2v1h-2zM203 25h1v1h-1zM209 25h1v1h-1zM247 25h1v1h-1zM336 25h1v1h-1zM362 25h2v1h-2zM366 25h1v1h-1zM372 25h1v1h-1zM3 26h1v1h-1zM23 26h1v1h-1zM44 26h1v1h-1zM69 26h1v1h-1zM117 26h1v1h-1zM141 26h1v1h-1zM189 26h1v1h-1zM195 26h1v1h-1zM245 26h2v1h-2zM325 26h1v1h-1zM331 26h1v1h-1zM352 26h1v1h-1zM358 26h1v1h-1zM3 27h1v1h-1zM23 27h1v1h-1zM44 27h1v1h-1zM117 27h1v1h-1zM137 27h2v1h-2zM194 27h1v1h-1zM253 27h1v1h-1zM268 27h1v1h-1zM330 27h1v1h-1zM357 27h1v1h-1zM3 28h1v1h-1zM23 28h1v1h-1zM68 28h1v1h-1zM110 28h1v1h-1zM221 28h1v1h-1zM247 28h1v1h-1zM280 28h1v1h-1zM384 28h1v1h-1zM8 29h1v1h-1zM23 29h1v1h-1zM38 29h1v1h-1zM68 29h1v1h-1zM211 29h1v1h-1zM237 29h1v1h-1zM246 29h1v1h-1zM252 29h1v1h-1zM285 29h1v1h-1zM374 29h1v1h-1zM23 30h1v1h-1zM32 30h1v1h-1zM37 30h1v1h-1zM108 30h1v1h-1zM193 30h1v1h-1zM210 30h1v1h-1zM236 30h1v1h-1zM243 30h1v1h-1zM329 30h1v1h-1zM356 30h1v1h-1zM373 30h1v1h-1zM9 31h1v1h-1zM16 31h1v1h-1zM23 31h1v1h-1zM108 31h1v1h-1zM148 31h1v1h-1zM204 31h1v1h-1zM217 31h1v1h-1zM272 31h1v1h-1zM279 31h1v1h-1zM284 31h1v1h-1zM367 31h1v1h-1zM380 31h1v1h-1zM12 32h2v1h-2zM23 32h1v1h-1zM32 32h1v1h-1zM117 32h1v1h-1zM146 32h1v1h-1zM203 32h1v1h-1zM209 32h1v1h-1zM222 32h1v1h-1zM272 32h1v1h-1zM366 32h1v1h-1zM372 32h1v1h-1zM385 32h1v1h-1zM5 33h1v1h-1zM23 33h1v1h-1zM32 33h1v1h-1zM37 33h1v1h-1zM109 33h1v1h-1zM117 33h1v1h-1zM144 33h1v1h-1zM189 33h1v1h-1zM209 33h1v1h-1zM217 33h1v1h-1zM248 33h1v1h-1zM325 33h1v1h-1zM352 33h1v1h-1zM372 33h1v1h-1zM380 33h1v1h-1zM6 34h1v1h-1zM23 34h1v1h-1zM38 34h1v1h-1zM76 34h1v1h-1zM117 34h1v1h-1zM142 34h1v1h-1zM199 34h1v1h-1zM209 34h1v1h-1zM217 34h1v1h-1zM281 34h1v1h-1zM332 34h1v1h-1zM336 34h1v1h-1zM362 34h1v1h-1zM372 34h1v1h-1zM380 34h1v1h-1zM18 35h1v1h-1zM23 35h1v1h-1zM140 35h1v1h-1zM209 35h1v1h-1zM238 35h1v1h-1zM268 35h1v1h-1zM326 35h1v1h-1zM372 35h1v1h-1zM23 36h1v1h-1zM112 36h1v1h-1zM138 36h1v1h-1zM148 36h1v1h-1zM209 36h1v1h-1zM216 36h1v1h-1zM274 36h1v1h-1zM327 36h1v1h-1zM372 36h1v1h-1zM379 36h1v1h-1zM8 37h1v1h-1zM15 37h1v1h-1zM23 37h1v1h-1zM137 37h1v1h-1zM146 37h1v1h-1zM209 37h1v1h-1zM249 37h1v1h-1zM269 37h1v1h-1zM275 37h1v1h-1zM340 37h1v1h-1zM372 37h1v1h-1zM6 38h1v1h-1zM23 38h1v1h-1zM195 38h6v1h-6zM209 38h1v1h-1zM250 38h1v1h-1zM276 38h1v1h-1zM337 38h1v1h-1zM358 38h6v1h-6zM372 38h1v1h-1zM403 38h3v1h-3zM415 38h4v1h-4zM428 38h4v1h-4zM12 39h1v1h-1zM23 39h1v1h-1zM209 39h1v1h-1zM214 39h1v1h-1zM245 39h1v1h-1zM372 39h1v1h-1zM377 39h1v1h-1zM414 39h1v1h-1zM427 39h1v1h-1zM23 40h1v1h-1zM139 40h1v1h-1zM209 40h1v1h-1zM219 40h1v1h-1zM279 40h1v1h-1zM372 40h1v1h-1zM382 40h1v1h-1zM414 40h1v1h-1zM427 40h1v1h-1zM23 41h1v1h-1zM209 41h1v1h-1zM216 41h1v1h-1zM372 41h1v1h-1zM379 41h1v1h-1zM414 41h1v1h-1zM427 41h1v1h-1zM2 42h1v1h-1zM23 42h1v1h-1zM209 42h1v1h-1zM274 42h1v1h-1zM280 42h1v1h-1zM372 42h1v1h-1zM414 42h1v1h-1zM427 42h1v1h-1zM23 43h1v1h-1zM209 43h1v1h-1zM248 43h1v1h-1zM251 43h1v1h-1zM372 43h1v1h-1zM414 43h1v1h-1zM427 43h1v1h-1zM5 44h1v1h-1zM277 44h1v1h-1z"/></svg>
  <div class="a" style="left:543px;top:11px;width:16px;height:16px;background:#2c4ce6;border:1.5px solid #0d145e;border-radius:3px;color:#fff;font-size:14px;font-weight:bold;line-height:16px;text-align:center;letter-spacing:-0.5px;background:linear-gradient(#2a4ff0,#5a5ee0)">m</div>
  <div class="bt" style="left:567px">Pradhan Mantri Kaus...</div>
  <svg class="a" style="left:697px;top:10px" width="16" height="17" viewBox="0 0 16 17"><rect x="0" y="0.5" width="16" height="16" fill="#fbf2d8"/><path d="M8 2.5 Q9 2.5 10 4.2 L14.2 11.5 Q15 13.5 13 13.5 L3 13.5 Q1 13.5 1.8 11.5 L6 4.2 Q7 2.5 8 2.5Z" fill="#e2f3cf" stroke="#2f6a52" stroke-width="1.3"/><path d="M2.2 10.8 Q1 13.5 3 13.5 L5.5 13.5" stroke="#b5553a" stroke-width="1.6" fill="none"/><path d="M10.5 13.5 L13 13.5 Q15 13.5 14 11" stroke="#2e8a3a" stroke-width="1.6" fill="none"/><text x="8" y="11.3" font-size="5.5" text-anchor="middle" fill="#3a3a2a" font-family="Liberation Sans" font-weight="bold">76</text></svg>
  <div class="bt" style="left:721px">SUNAINA SAMRIDDH...</div>
  <svg class="a" style="left:852px;top:11px" width="15" height="15" viewBox="0 0 15 15"><circle cx="7.5" cy="7.5" r="6.8" fill="#5a5a5a"/><path d="M3.2 5.2 C4.2 3.2 6.2 2.6 7.6 3.2 C6.8 4.4 7.2 5.4 8.6 6.2 C9.8 7.0 11.4 6.6 12.2 7.6 C11.8 10.2 9.8 12.4 7.2 12.2 C7.6 10.8 7.2 9.4 5.8 8.6 C4.8 8.0 3.4 8.2 2.6 7.8 C2.6 6.8 2.8 6.0 3.2 5.2Z" fill="#fff"/></svg>
  <div class="bt" style="left:875px">CVBuilder</div>
</div>
<div id="sep" class="a"></div>
<div id="gap" class="a"></div>
<div id="nav" class="a">
  <div class="ni" style="left:0;width:78px;text-indent:11px">HOME</div>
  <div class="ni" style="left:78px;width:109px">REGISTRATION</div>
  <div class="ni" style="left:187px;width:98px">ENROLMENT</div>
  <div class="ni" style="left:285px;width:86px">TRAINING</div>
  <div class="ni" style="left:371px;width:144px">PLACEMENT OFFICER</div>
  <div class="ni" style="left:515px;width:113px">CERTIFICATION</div>
  <div class="ni" style="left:628px;width:81px">FINANCE</div>
  <div class="ni" style="left:709px;width:58px">HELP</div>
</div>
<div class="a" style="left:12px;top:111px;width:912px;height:625px;background:#fff;border-left:1px solid #bababa;border-right:1px solid #c0c0c0"></div>
<div class="a" style="left:13px;top:314px;width:910px;height:55px;background:#e5e6e8"></div>
<div class="a" style="left:13px;top:373px;width:910px;height:357px;background:#e6e7e9"></div>
<div class="a" style="left:12px;top:112px;width:911px;height:27px;background:#127f89;border-radius:3px;color:#f4ffff;font-size:12.8px;font-weight:bold;text-align:center;line-height:29px;padding-left:9px">VIEW &amp; MODIFY CANDIDATE</div>
<!-- radios -->
<div class="a" style="left:23px;top:156px;width:11.5px;height:11.5px;border-radius:50%;background:#247a74;border:1.5px solid #1f6461"></div>
<div class="a" style="left:26.5px;top:159.5px;width:4.5px;height:4.5px;border-radius:50%;background:#0d0d0d"></div>
<div class="lb" style="left:40px;top:158px;transform:scaleX(0.89)">Register Candidate</div>
<div class="a" style="left:175px;top:156px;width:11.5px;height:11.5px;border-radius:50%;background:#1a7d86"></div>
<div class="lb" style="left:192px;top:158px;transform:scaleX(0.89)">Enrolled Candidate</div>
<!-- row1 -->
<div class="lb" style="left:21px;top:186px;transform:scaleX(0.92)">Scheme</div>
<div class="lb" style="left:170px;top:186px">Training Type</div>
<div class="lb" style="left:319px;top:186px">Sector</div>
<div class="lb" style="left:468px;top:186px">Sub-Sector</div>
<div class="lb" style="left:617px;top:186px">JobRole</div>
<div class="sel" style="left:21px;top:202px;width:134px"><span>Pradhan Mantri Kaus</span><i></i></div>
<div class="sel" style="left:170px;top:202px;width:134px"><span>Select</span><i></i></div>
<div class="sel" style="left:319px;top:202px;width:134px"><span>Select</span><i></i></div>
<div class="sel" style="left:468px;top:202px;width:134px"><span>Select</span><i></i></div>
<div class="sel" style="left:617px;top:202px;width:283px"><span>Select</span><i></i></div>
<!-- row2 -->
<div class="lb" style="left:21px;top:230px;transform:scaleX(0.93)">Candidate Name</div>
<div class="lb" style="left:319px;top:230px;transform:scaleX(0.92)">Centre Candidate Id</div>
<div class="lb" style="left:468px;top:230px">Gender</div>
<div class="lb" style="left:617px;top:230px">Registration Date - From To</div>
<div class="sel" style="left:21px;top:246px;width:283px"><span>Name</span></div>
<div class="sel" style="left:319px;top:246px;width:133px"><span>centre candidate id</span></div>
<div class="sel" style="left:468px;top:246px;width:134px"><span>Select</span><i></i></div>
<div class="sel" style="left:617px;top:246px;width:75px"></div>
<div class="sel" style="left:692px;top:246px;width:74px"></div>
<!-- row3 -->
<div class="lb" style="left:21px;top:274px;transform:scaleX(0.84)">Eligible For Enrolment</div>
<div class="lb" style="left:170px;top:274px;transform:scaleX(0.85)">Eligible For Disbursement</div>
<div class="lb" style="left:319px;top:274px;transform:scaleX(0.855)">Mobile Number Exists In System</div>
<div class="lb" style="left:543px;top:274px">Batch Name</div>
<div class="lb" style="left:692px;top:274px">Batch Start Date From - to:</div>
<div class="sel" style="left:21px;top:290px;width:134px"><span>Select</span><i></i></div>
<div class="sel" style="left:170px;top:290px;width:134px"><span>Select</span><i></i></div>
<div class="sel" style="left:319px;top:290px;width:200px"><span>Select</span><i></i></div>
<div class="sel dis" style="left:543px;top:290px;width:140px"><span>Select</span><i></i></div>
<div class="sel" style="left:692px;top:290px;width:66px;background:#ebebeb"></div>
<div class="sel" style="left:766px;top:290px;width:67px;background:#ebebeb"></div>
<div class="btn" style="left:360px;top:328px">SEARCH</div>
<div class="btn" style="left:480px;top:328px">CLEAR</div>
<!--TABLE-->
<div class="a" style="left:23px;top:401px;width:889px;height:32px;background:#137d87;border-radius:9px 9px 0 0"></div>
<div class="a" style="left:31px;top:401px;height:30px;line-height:30px;color:#f6ffff;font-size:13px;font-weight:bold;white-space:nowrap;letter-spacing:-0.15px">REGISTERED CANDIDATE</div>
<div class="th l" style="left:23px;width:40px;border-left:none;font-size:12px"><span></span><u></u></div>
<div class="th d" style="left:63px;width:96px;font-size:12.3px"><span>Centre<br>Candidate ID</span><u></u></div>
<div class="th l" style="left:159px;width:112px;font-size:12.5px"><span>Candidate<br>Name</span><u></u></div>
<div class="th d" style="left:271px;width:68px;font-size:12px"><span>Gender</span><u></u></div>
<div class="th l" style="left:339px;width:92px;font-size:12px"><span>Mobile<br>Number</span><u></u></div>
<div class="th d" style="left:431px;width:112px;font-size:11.6px"><span>Email Id</span><u class="up"></u></div>
<div class="th l" style="left:543px;width:74px;font-size:11.8px"><span>Eligible<br>For<br>Enrolment</span><u></u></div>
<div class="th d" style="left:617px;width:92px;font-size:11.5px"><span>Eligible For<br>Disbursement</span><u></u></div>
<div class="th l" style="left:709px;width:104px;font-size:11.5px"><span>Mobile Number<br>Exists In System</span><u></u></div>
<div class="th d" style="left:813px;width:99px;font-size:12px"><span>Type Of<br>Disability</span><u></u></div>
<div class="a" style="left:23px;top:477px;width:869px;height:242px;background:#fff;overflow:hidden">
<div class="dot" style="top:9px"></div>
<div class="td" style="left:42px;top:0px;width:94px;letter-spacing:-0.5px"><span>KA001D58-00000E<br>D</span></div>
<div class="td" style="left:137px;top:0px;width:112px"><span>Namrta Kumari</span></div>
<div class="td" style="left:250px;top:0px;width:67px"><span>Female</span></div>
<div class="td" style="left:318px;top:0px;width:92px;letter-spacing:-0.5px"><span>8580983166</span></div>
<div class="td" style="left:411px;top:0px;width:111px"><span>kanwarmona62@gma<br>il.com</span></div>
<div class="td" style="left:523px;top:0px;width:74px"><span>Yes</span></div>
<div class="td" style="left:598px;top:0px;width:93px"><span>Yes</span></div>
<div class="td" style="left:692px;top:0px;width:103px"><span>No</span></div>
<div class="td" style="left:796px;top:0px;width:74px"><span>None</span></div>
<div class="a" style="left:0;top:32px;width:869px;height:2px;background:#dcdcdc"></div>
<div class="dot" style="top:41px"></div>
<div class="td" style="left:42px;top:32px;width:94px;letter-spacing:-0.5px"><span>KA001D58-00000C<br>2</span></div>
<div class="td" style="left:137px;top:32px;width:112px"><span>Kritartha Debbarma</span></div>
<div class="td" style="left:250px;top:32px;width:67px"><span>Male</span></div>
<div class="td" style="left:318px;top:32px;width:92px;letter-spacing:-0.5px"><span>8413084617</span></div>
<div class="td" style="left:411px;top:32px;width:111px"><span>kritarthadebbarma01<br>@gmail.com</span></div>
<div class="td" style="left:523px;top:32px;width:74px"><span>Yes</span></div>
<div class="td" style="left:598px;top:32px;width:93px"><span>Yes</span></div>
<div class="td" style="left:692px;top:32px;width:103px"><span>No</span></div>
<div class="td" style="left:796px;top:32px;width:74px"><span>None</span></div>
<div class="a" style="left:0;top:64px;width:869px;height:2px;background:#dcdcdc"></div>
<div class="dot" style="top:73px"></div>
<div class="td s" style="left:42px;top:64px;width:94px;letter-spacing:-0.5px"><span><i>KA001D58-0000115</i></span></div>
<div class="td s" style="left:137px;top:64px;width:112px"><span><i>Manish</i></span></div>
<div class="td s" style="left:250px;top:64px;width:67px"><span><i>Male</i></span></div>
<div class="td s" style="left:318px;top:64px;width:92px;letter-spacing:-0.5px"><span><i>9311773119</i></span></div>
<div class="td s" style="left:411px;top:64px;width:111px"><span><i>manishpmkvy97@gma</i><br><i>il.com</i></span></div>
<div class="td s" style="left:523px;top:64px;width:74px"><span><i>Yes</i></span></div>
<div class="td s" style="left:598px;top:64px;width:93px"><span><i>No</i></span></div>
<div class="td s" style="left:692px;top:64px;width:103px"><span><i>No</i></span></div>
<div class="td s" style="left:796px;top:64px;width:74px"><span><i>None</i></span></div>
<div class="a" style="left:0;top:96px;width:869px;height:2px;background:#dcdcdc"></div>
<div class="dot" style="top:105px"></div>
<div class="td" style="left:42px;top:96px;width:94px;letter-spacing:-0.5px"><span>KA001D58-00000D<br>8</span></div>
<div class="td" style="left:137px;top:96px;width:112px"><span>Man Singh</span></div>
<div class="td" style="left:250px;top:96px;width:67px"><span>Male</span></div>
<div class="td" style="left:318px;top:96px;width:92px;letter-spacing:-0.5px"><span>9805741156</span></div>
<div class="td" style="left:411px;top:96px;width:111px"><span>manthakur534@gmail.<br>com</span></div>
<div class="td" style="left:523px;top:96px;width:74px"><span>Yes</span></div>
<div class="td" style="left:598px;top:96px;width:93px"><span>Yes</span></div>
<div class="td" style="left:692px;top:96px;width:103px"><span>No</span></div>
<div class="td" style="left:796px;top:96px;width:74px"><span>None</span></div>
<div class="a" style="left:0;top:128px;width:869px;height:2px;background:#dcdcdc"></div>
<div class="dot" style="top:137px"></div>
<div class="td" style="left:42px;top:128px;width:94px;letter-spacing:-0.5px"><span>KA001D58-00000EF</span></div>
<div class="td" style="left:137px;top:128px;width:112px"><span>Krishna Nandan Sharm<br>a</span></div>
<div class="td" style="left:250px;top:128px;width:67px"><span>Male</span></div>
<div class="td" style="left:318px;top:128px;width:92px;letter-spacing:-0.5px"><span>9470177400</span></div>
<div class="td" style="left:411px;top:128px;width:111px"><span>nandankrishna5566@<br>gmail.com</span></div>
<div class="td" style="left:523px;top:128px;width:74px"><span>Yes</span></div>
<div class="td" style="left:598px;top:128px;width:93px"><span>Yes</span></div>
<div class="td" style="left:692px;top:128px;width:103px"><span>No</span></div>
<div class="td" style="left:796px;top:128px;width:74px"><span>None</span></div>
<div class="a" style="left:0;top:160px;width:869px;height:2px;background:#dcdcdc"></div>
<div class="dot" style="top:169px"></div>
<div class="td" style="left:42px;top:160px;width:94px;letter-spacing:-0.5px"><span>KA001D58-00000D<br>5</span></div>
<div class="td" style="left:137px;top:160px;width:112px"><span>Ramendra Nautiyal</span></div>
<div class="td" style="left:250px;top:160px;width:67px"><span>Male</span></div>
<div class="td" style="left:318px;top:160px;width:92px;letter-spacing:-0.5px"><span>7017919366</span></div>
<div class="td" style="left:411px;top:160px;width:111px"><span>nautiyall.ram@gmail.c<br>om</span></div>
<div class="td" style="left:523px;top:160px;width:74px"><span>Yes</span></div>
<div class="td" style="left:598px;top:160px;width:93px"><span>Yes</span></div>
<div class="td" style="left:692px;top:160px;width:103px"><span>No</span></div>
<div class="td" style="left:796px;top:160px;width:74px"><span>None</span></div>
<div class="a" style="left:0;top:192px;width:869px;height:2px;background:#dcdcdc"></div>
<div class="dot" style="top:201px"></div>
<div class="td" style="left:42px;top:192px;width:94px;letter-spacing:-0.5px"><span>KA001D58-00000A<br>7</span></div>
<div class="td" style="left:137px;top:192px;width:112px"><span>Balaram Debbarma</span></div>
<div class="td" style="left:250px;top:192px;width:67px"><span>Male</span></div>
<div class="td" style="left:318px;top:192px;width:92px;letter-spacing:-0.5px"><span>7085617761</span></div>
<div class="td" style="left:411px;top:192px;width:111px"><span>nupurdebbarma@gm<br>ail.com</span></div>
<div class="td" style="left:523px;top:192px;width:74px"><span>Yes</span></div>
<div class="td" style="left:598px;top:192px;width:93px"><span>Yes</span></div>
<div class="td" style="left:692px;top:192px;width:103px"><span>No</span></div>
<div class="td" style="left:796px;top:192px;width:74px"><span>None</span></div>
<div class="a" style="left:0;top:224px;width:869px;height:2px;background:#dcdcdc"></div>
<div class="dot" style="top:233px"></div>
<div class="td" style="left:42px;top:224px;width:94px;letter-spacing:-0.5px"><span>KA001D58-00000B<br>&nbsp;</span></div>
<div class="td" style="left:137px;top:224px;width:112px"><span>Manoj Debnath</span></div>
<div class="td" style="left:250px;top:224px;width:67px"><span>Male</span></div>
<div class="td" style="left:318px;top:224px;width:92px;letter-spacing:-0.5px"><span>8414060254</span></div>
<div class="td" style="left:411px;top:224px;width:111px"><span>nupurdebbarma@gm<br>ail.com</span></div>
<div class="td" style="left:523px;top:224px;width:74px"><span>Yes</span></div>
<div class="td" style="left:598px;top:224px;width:93px"><span>Yes</span></div>
<div class="td" style="left:692px;top:224px;width:103px"><span>No</span></div>
<div class="td" style="left:796px;top:224px;width:74px"><span>None</span></div>
<div class="a" style="left:40px;top:0;width:2px;height:242px;background:#dcdcdc"></div>
<div class="a" style="left:135px;top:0;width:2px;height:242px;background:#dcdcdc"></div>
<div class="a" style="left:248px;top:0;width:2px;height:242px;background:#dcdcdc"></div>
<div class="a" style="left:316px;top:0;width:2px;height:242px;background:#dcdcdc"></div>
<div class="a" style="left:409px;top:0;width:2px;height:242px;background:#dcdcdc"></div>
<div class="a" style="left:521px;top:0;width:2px;height:242px;background:#dcdcdc"></div>
<div class="a" style="left:596px;top:0;width:2px;height:242px;background:#dcdcdc"></div>
<div class="a" style="left:690px;top:0;width:2px;height:242px;background:#dcdcdc"></div>
<div class="a" style="left:794px;top:0;width:2px;height:242px;background:#dcdcdc"></div>
</div>
<div class="a" style="left:22px;top:477px;width:2px;height:242px;background:#dcdcdc"></div>
<div class="a" style="left:892px;top:477px;width:20px;height:242px;background:#f1f1f1"></div>
<div class="a" style="left:899px;top:485px;border-left:5px solid transparent;border-right:5px solid transparent;border-bottom:5px solid #505050"></div>
<div class="a" style="left:899px;top:707px;border-left:5px solid transparent;border-right:5px solid transparent;border-top:5px solid #505050"></div>
<div class="a" style="left:898px;top:528px;width:12px;height:18px;background:#c1c1c1"></div>
<!--/TABLE-->
</body></html>
